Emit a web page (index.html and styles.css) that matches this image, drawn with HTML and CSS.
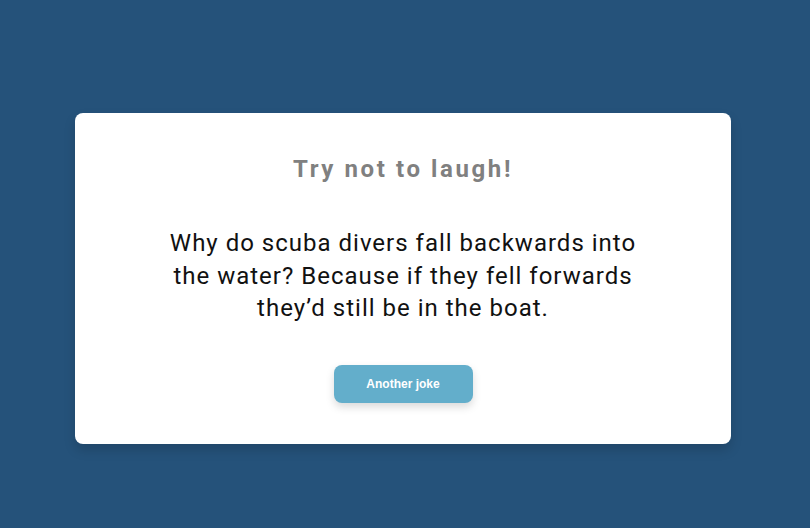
FILE: index.html
```html
<!DOCTYPE html>
<html>
<head>
<meta charset="utf-8">
<link rel="stylesheet" href="styles.css">
</head>
<body>
<div class="page">
  <div class="card">
    <h3 class="title">Try not to laugh!</h3>
    <div class="joke">Why do scuba divers fall backwards into the water? Because if they fell forwards they’d still be in the boat.</div>
    <button class="btn">Another joke</button>
  </div>
</div>
</body>
</html>
```
FILE: styles.css
```css
html, body {
  margin: 0;
  padding: 0;
  height: 100%;
}
body {
  background: #25527a;
  font-family: Roboto, "Liberation Sans", sans-serif;
}
.page {
  padding-top: 113px;
  padding-left: 75px;
}
.card {
  box-sizing: border-box;
  width: 656px;
  height: 331px;
  background: #ffffff;
  border-radius: 8px;
  box-shadow: 0 6px 12px rgba(0, 0, 0, 0.15);
  display: flex;
  flex-direction: column;
  align-items: center;
  padding-top: 40px;
}
.title {
  margin: 0;
  font-size: 24px;
  font-weight: 700;
  letter-spacing: 2.6px;
  color: #808080;
  line-height: 32px;
}
.joke {
  margin-top: 42px;
  width: 490px;
  font-size: 24px;
  line-height: 32.5px;
  color: #111;
  text-align: center;
  letter-spacing: 1px;
}
.btn {
  margin-top: 40px;
  width: 139px;
  height: 38px;
  border: none;
  border-radius: 8px;
  background: #63aecb;
  color: #ffffff;
  font-family: "Liberation Sans", Arial, sans-serif;
  font-weight: 700;
  font-size: 12px;
  box-shadow: 0 4px 8px rgba(0, 0, 0, 0.15);
}
```
